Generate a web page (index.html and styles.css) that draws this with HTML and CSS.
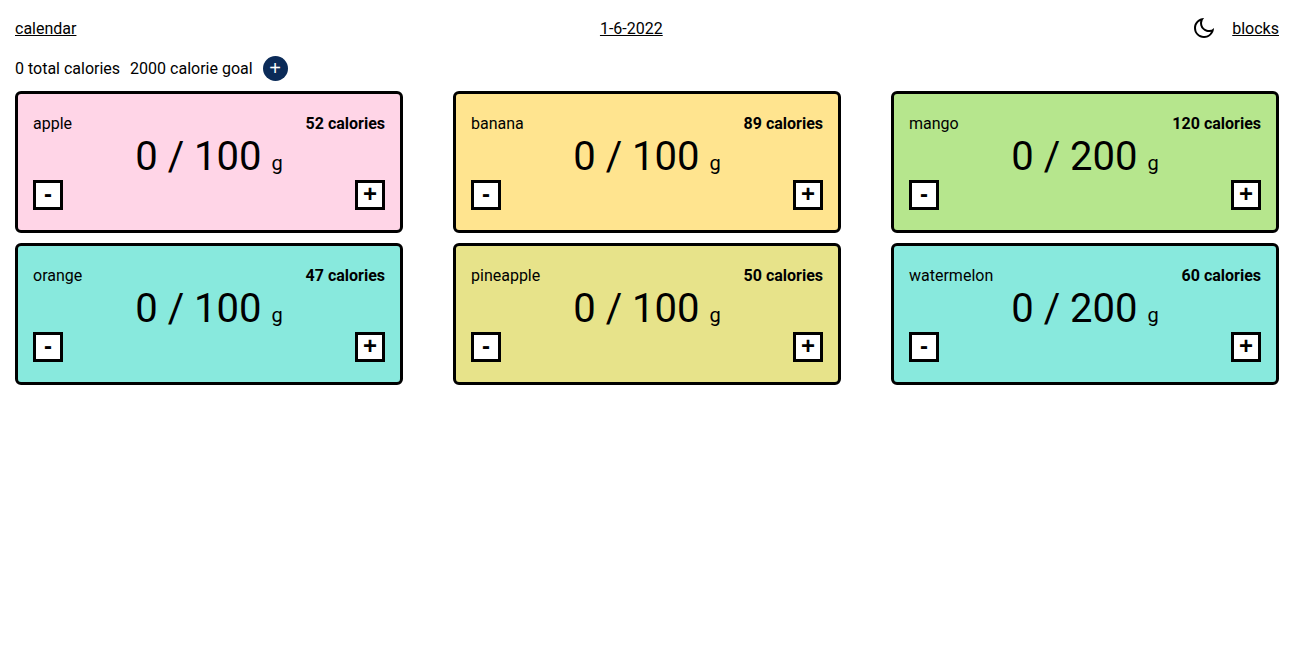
FILE: index.html
```html
<!DOCTYPE html>
<html lang="en">
<head>
<meta charset="utf-8">
<meta name="viewport" content="width=device-width, initial-scale=1">
<title>Calories</title>
<link rel="stylesheet" href="styles.css">
</head>
<body>
<header class="nav">
  <a href="#">calendar</a>
  <a href="#">1-6-2022</a>
  <div class="nav-end">
    <button class="theme" type="button" aria-label="Dark mode"><svg viewBox="0 1 24 24" width="24" height="24"><path d="M10 7a7 7 0 0 0 12 4.9v.1c0 5.523-4.477 10-10 10S2 17.523 2 12 6.477 2 12 2h.1A6.979 6.979 0 0 0 10 7zm-6 5a8 8 0 0 0 15.062 3.762A9 9 0 0 1 8.238 4.938 7.999 7.999 0 0 0 4 12z"/></svg></button>
    <a href="#">blocks</a>
  </div>
</header>
<main>
  <div class="summary">
    <span>0 total calories</span>
    <span>2000 calorie goal</span>
    <button class="add" type="button" aria-label="Add food">+</button>
  </div>
  <section class="grid">
    <article class="card pink">
      <div class="row"><span>apple</span><strong>52 calories</strong></div>
      <p class="amount">0 / 100 <span class="unit">g</span></p>
      <div class="row"><button class="step" type="button">-</button><button class="step" type="button">+</button></div>
    </article>
    <article class="card yellow">
      <div class="row"><span>banana</span><strong>89 calories</strong></div>
      <p class="amount">0 / 100 <span class="unit">g</span></p>
      <div class="row"><button class="step" type="button">-</button><button class="step" type="button">+</button></div>
    </article>
    <article class="card green">
      <div class="row"><span>mango</span><strong>120 calories</strong></div>
      <p class="amount">0 / 200 <span class="unit">g</span></p>
      <div class="row"><button class="step" type="button">-</button><button class="step" type="button">+</button></div>
    </article>
    <article class="card teal">
      <div class="row"><span>orange</span><strong>47 calories</strong></div>
      <p class="amount">0 / 100 <span class="unit">g</span></p>
      <div class="row"><button class="step" type="button">-</button><button class="step" type="button">+</button></div>
    </article>
    <article class="card olive">
      <div class="row"><span>pineapple</span><strong>50 calories</strong></div>
      <p class="amount">0 / 100 <span class="unit">g</span></p>
      <div class="row"><button class="step" type="button">-</button><button class="step" type="button">+</button></div>
    </article>
    <article class="card teal">
      <div class="row"><span>watermelon</span><strong>60 calories</strong></div>
      <p class="amount">0 / 200 <span class="unit">g</span></p>
      <div class="row"><button class="step" type="button">-</button><button class="step" type="button">+</button></div>
    </article>
  </section>
</main>
</body>
</html>
```
FILE: styles.css
```css
* { box-sizing: border-box; }
body {
  margin: 0;
  padding: 15px;
  font: 16px/20px Roboto, sans-serif;
  color: #000;
  background: #fff;
}
a { color: inherit; text-decoration: underline; }
button {
  font-family: "Liberation Sans", Arial, sans-serif;
  color: inherit;
  cursor: pointer;
}
.nav {
  display: flex;
  justify-content: space-between;
  align-items: center;
  min-height: 28px;
}
.nav-end {
  display: flex;
  align-items: center;
  gap: 10px;
}
.theme {
  display: flex;
  padding: 0 6px;
  border: 0;
  background: none;
}
.summary {
  display: flex;
  align-items: center;
  gap: 10px;
  margin: 13px 0 10px;
}
.add {
  width: 25px;
  height: 25px;
  padding: 0;
  border: 0;
  border-radius: 50%;
  background: #0b2b58;
  color: #fff;
  font-size: 20px;
  line-height: 23px;
}
.grid {
  display: grid;
  grid-template-columns: repeat(3, 1fr);
  gap: 10px 50px;
}
.card {
  padding: 20px 15px;
  border: 3px solid #000;
  border-radius: 6px;
}
.row {
  display: flex;
  justify-content: space-between;
}
.amount {
  margin: 0;
  text-align: center;
  font-size: 40px;
  line-height: 46px;
}
.unit {
  font-size: 20px;
  line-height: 20px;
}
.step {
  width: 30px;
  height: 30px;
  padding: 0 0 2px;
  border: 3px solid #000;
  background: #fff;
  font-size: 24px;
  font-weight: 700;
  line-height: 22px;
}
.pink { background: #ffd5e7; }
.yellow { background: #ffe48f; }
.green { background: #b6e68d; }
.teal { background: #88e9dd; }
.olive { background: #e7e38a; }
```
